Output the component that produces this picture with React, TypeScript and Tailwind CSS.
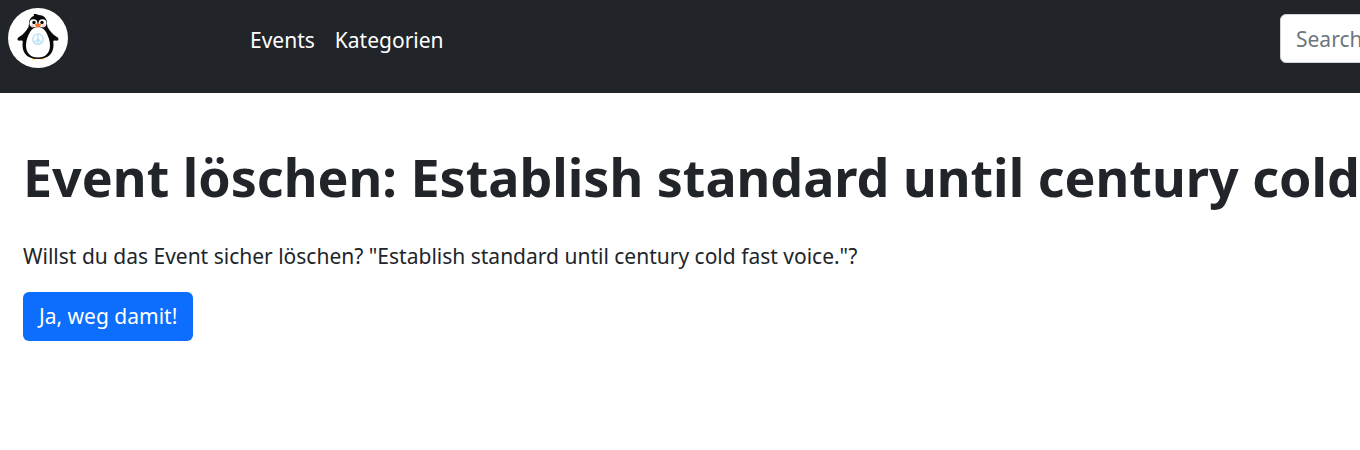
const navLinks = [
  { name: "Events", href: "#events" },
  { name: "Kategorien", href: "#kategorien" },
];

function PenguinLogo() {
  return (
    <svg viewBox="0 0 60 60" className="size-[60px]" role="img" aria-label="Pinguin">
      <circle cx="30" cy="30" r="30" fill="#fff" />
      {/* feet */}
      <ellipse cx="26" cy="50.5" rx="2.5" ry="1" fill="#f9c22e" />
      <ellipse cx="34" cy="50.5" rx="2.5" ry="1" fill="#f9c22e" />
      {/* flippers */}
      <path d="M20.5 19c-2.500 4-5 7.500-9.500 10c-2 1.200-1.800 3.300-.3 3.600c1.500.3 2.300-.2 3.300 0c1 .4.8 1.600 2 1.700l7-5z" fill="#0a0a0a" />
      <path d="M39.5 19c2.500 4 5 7.500 9.500 10c2 1.200 1.800 3.300.3 3.600c-1.500.3-2.300-.2-3.300 0c-1 .4-.8 1.600-2 1.700l-7-5z" fill="#0a0a0a" />
      {/* body and head */}
      <path d="M25.500 6.300c1.700-.6 3.500-.3 5 .7c5.200 0 8.500 3.300 8.500 8c0 4.500 1.500 6.500 3.500 10.500c2 4 3 7.500 3 11.500c0 9-6 14-15.500 14s-15.500-5-15.500-14c0-4 1-7.500 3-11.500c2-4 3.500-6 3.500-10.500c0-3.300 1.700-6 5-7.300z" fill="#0a0a0a" />
      <path d="M30 19c3 0 6 1.500 8 5c2.300 4 4 9 4 13.500c0 7.500-4.500 12-12 12s-12-4.500-12-12c0-4.500 1.700-9.500 4-13.500c2-3.500 5-5 8-5z" fill="#fff" />
      {/* face */}
      <ellipse cx="25.500" cy="15.300" rx="4" ry="4" fill="#fff" />
      <ellipse cx="34.500" cy="15.300" rx="4" ry="4" fill="#fff" />
      <circle cx="26" cy="14.500" r="1.700" fill="#0a0a0a" />
      <circle cx="34" cy="14.500" r="1.700" fill="#0a0a0a" />
      <circle cx="24.500" cy="18" r="1.400" fill="#ffbfd0" />
      <circle cx="35.500" cy="18" r="1.400" fill="#ffbfd0" />
      <path d="M26.800 16.500c1.500-1.200 4.900-1.200 6.400 0c-.5 1.700-2.200 2.800-3.200 3.300c-1-.5-2.700-1.600-3.200-3.300z" fill="#ff762b" />
      {/* peace sign */}
      <path d="M30 26v10.500M30 31l-3.700 3.700M30 31l3.700 3.700" fill="none" stroke="#c4e3f7" strokeWidth="1.600" />
      <circle cx="30" cy="31.200" r="5.200" fill="none" stroke="#c4e3f7" strokeWidth="1.600" />
    </svg>
  );
}

function Navbar() {
  return (
    <nav className="flex items-start overflow-hidden bg-[#212529] pb-[25px] text-[21px] leading-8 text-white">
      <a href="#start" className="ml-2 mt-2 w-[242px] shrink-0">
        <PenguinLogo />
      </a>
      <div className="flex shrink-0 gap-5 pt-6">
        {navLinks.map((link) => (
          <a key={link.name} href={link.href}>
            {link.name}
          </a>
        ))}
      </div>
      <form className="-mr-56 ml-auto shrink-0 pt-3.5">
        <input
          type="search"
          aria-label="Search"
          placeholder="Search"
          className="h-[49px] w-[304px] rounded-md border border-[#ced4da] bg-white px-[15px] placeholder:text-[#6c757d]"
        />
      </form>
    </nav>
  );
}

export default function App() {
  return (
    <div className="min-h-screen overflow-hidden bg-white font-['Noto_Sans',sans-serif] text-[#212529]">
      <Navbar />
      <main className="px-[23px] pt-[52px]">
        <h1 className="whitespace-nowrap text-[52px] font-bold leading-[64px]">
          Event löschen: Establish standard until century cold fast voice.
        </h1>
        <p className="mt-[31px] text-[21px] leading-8">
          Willst du das Event sicher löschen? "Establish standard until century cold fast voice."?
        </p>
        <button type="button" className="mt-5 h-[49px] rounded-md bg-[#0d6efd] px-4 text-[21px] text-white">
          Ja, weg damit!
        </button>
      </main>
    </div>
  );
}
